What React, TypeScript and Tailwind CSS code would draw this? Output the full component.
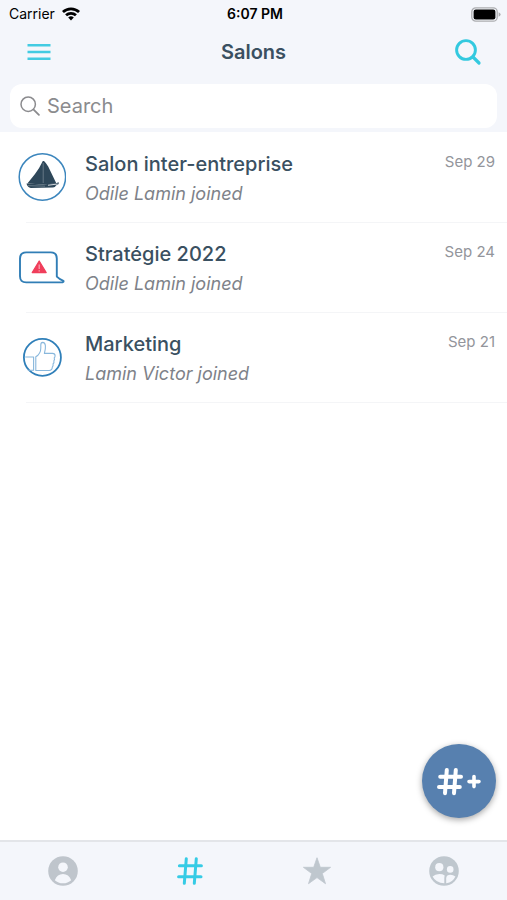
import { useState } from "react";
import type { ReactNode } from "react";

function Wifi() {
  return (
    <svg viewBox="0 0 18 14" className="w-[18px] h-[14px]" fill="black" aria-hidden="true">
      <path d="M0 4.1a12.8 12.8 0 0 1 18 0l-1.9 2a10.1 10.1 0 0 0-14.2 0z" />
      <path d="M3.1 7.3a8.4 8.4 0 0 1 11.8 0l-1.9 2a5.7 5.7 0 0 0-8 0z" />
      <path d="M6.2 10.5a4 4 0 0 1 5.6 0L9 13.4z" />
    </svg>
  );
}

function Battery() {
  return (
    <svg viewBox="0 0 30 15" className="w-[30px] h-[15px]" aria-hidden="true">
      <rect x="0.8" y="0.8" width="25.4" height="13.4" rx="4" fill="none" stroke="#acadb0" strokeWidth="1.3" />
      <rect x="2.6" y="2.6" width="21.8" height="9.8" rx="2.2" fill="#000" />
      <path d="M27.6 5.2q2 .8 2 2.3t-2 2.3z" fill="#acadb0" />
    </svg>
  );
}

function Sailboat() {
  return (
    <svg viewBox="0 0 48 48" className="size-12" aria-hidden="true">
      <circle cx="24.4" cy="24" r="23.2" fill="#fff" stroke="#3c86bd" strokeWidth="1.5" />
      <path d="M24.8 8h1.2q2 1.8 4.2 5.6L38.4 30.4 25 31.6 9.4 30.6 17 21q4.6-6 7.8-13z" fill="#2e4759" />
      <path d="M25.2 10v20" stroke="#8c9ba5" strokeWidth=".6" />
      <path d="M8.6 30.6 25 31.6l14-1.7 1.5-1 .2 2-2.7 1.6q-.8 1.9-3 2.1l-22.3.3q-3-.6-4.1-4z" fill="#2e4759" />
      <path d="m30 32.2 9.6-1.2" stroke="#d3d8db" strokeWidth="1.1" />
      <path d="m10 32.6 17 .6" stroke="#8c9ba5" strokeWidth=".6" />
    </svg>
  );
}

function AlertBubble() {
  return (
    <svg viewBox="0 0 48 48" className="size-12" fill="none" aria-hidden="true">
      <path
        d="M8.2 9.4h24.6q6 0 6 6V33.6q2.6 2.6 6.6 4.2.6.9-1 1.6H8.2Q2 39.4 2 33.2V15.6q0-6.2 6.2-6.2z"
        stroke="#317eb6"
        strokeWidth="1.9"
        strokeLinejoin="round"
      />
      <path d="M21.2 18 28.2 29.6H14.2z" fill="#f03e5b" stroke="#f03e5b" strokeWidth="1.2" strokeLinejoin="round" />
      <path d="M21.2 21.5v4.4M21.2 27.2v1.2" stroke="#f9a9b6" strokeWidth="1.2" />
    </svg>
  );
}

function ThumbsUp() {
  return (
    <svg viewBox="0 0 48 48" className="size-12" fill="none" aria-hidden="true">
      <circle cx="24.4" cy="24.4" r="18.5" stroke="#2f7fb9" strokeWidth="1.8" />
      <g stroke="#88b7dc" strokeWidth="1.1" strokeLinejoin="round">
        <path d="M7.2 24h8.4v13.3h-5.8" />
        <path d="M17.8 23.7q5-3 5-8.8V12q0-2.6 1.9-2.6 2.4.1 2.7 3.4.3 3.2-1 7.6h8.1q2.6.2 2.6 2.4 0 1.6-.9 2.2.8 1.4-.3 2.8.5 2-.8 3 .3 2.4-.8 3.4-.2 3.2-3.2 3.3H17.8z" />
      </g>
    </svg>
  );
}

function AddSalon() {
  return (
    <svg viewBox="0 0 48 32" className="w-12 h-8" fill="none" stroke="#fff" strokeLinecap="round" aria-hidden="true">
      <path d="M11.8 5 10 28.2M20.8 5 19 28.2M5.2 11.8h20.8M4 22h20.8" strokeWidth="4" />
      <path d="M39 11.6v10M34 16.6h10" strokeWidth="3.6" />
    </svg>
  );
}

function PersonIcon() {
  return (
    <svg viewBox="0 0 30 30" className="size-[30px]" aria-hidden="true">
      <circle cx="15" cy="15" r="14.8" fill="#bfc5cc" />
      <circle cx="15" cy="11.2" r="4.8" fill="#f4f6fb" />
      <path d="M6.8 24.2q2.4-6.2 8.2-6.2t8.2 6.2q-3.4 3.1-8.2 3.1t-8.2-3.1z" fill="#f4f6fb" />
    </svg>
  );
}

function HashIcon() {
  return (
    <svg viewBox="0 0 30 30" className="size-[30px]" fill="none" stroke="#36cbe5" strokeWidth="3" strokeLinecap="round" aria-hidden="true">
      <path d="m11.3 2.7-2 24.6M21.3 2.7l-2 24.6M4.4 9.8h22M3.6 20.8h22.4" />
    </svg>
  );
}

function StarIcon() {
  return (
    <svg viewBox="0 0 30 30" className="size-[30px]" aria-hidden="true">
      <path
        d="m15 1.7 3.3 9.6h10.3l-8.3 6.2 3.2 10.2-8.5-6.1-8.5 6.1 3.2-10.2-8.3-6.2h10.3z"
        fill="#bfc7ce"
        stroke="#bfc7ce"
        strokeWidth=".8"
        strokeLinejoin="round"
      />
    </svg>
  );
}

function GroupIcon() {
  return (
    <svg viewBox="0 0 30 30" className="size-[30px]" aria-hidden="true">
      <circle cx="15" cy="15" r="14.8" fill="#bfc7ce" />
      <g fill="#f4f6fb">
        <circle cx="10.3" cy="11.2" r="4.1" />
        <circle cx="21.2" cy="13.4" r="3.3" />
        <path d="M3.6 20.6q2.4-2.6 6.7-2.6 3.4 0 5.4 1.4-.4 1.4-.4 3.2v4.7Q6.8 27 3.6 20.6z" />
        <path d="M17.2 27.2V22q.4-3.2 4.2-3.2 2.8 0 5 1.6-2.4 5.7-9.2 6.8z" />
      </g>
    </svg>
  );
}

const salons: { name: string; last: string; date: string; icon: ReactNode }[] = [
  { name: "Salon inter-entreprise", last: "Odile Lamin joined", date: "Sep 29", icon: <Sailboat /> },
  { name: "Stratégie 2022", last: "Odile Lamin joined", date: "Sep 24", icon: <AlertBubble /> },
  { name: "Marketing", last: "Lamin Victor joined", date: "Sep 21", icon: <ThumbsUp /> },
];

const tabs = [
  { label: "Profile", icon: <PersonIcon /> },
  { label: "Salons", icon: <HashIcon /> },
  { label: "Favorites", icon: <StarIcon /> },
  { label: "Groups", icon: <GroupIcon /> },
];

export default function App() {
  const [query, setQuery] = useState("");
  const shown = salons.filter((s) => s.name.toLowerCase().includes(query.toLowerCase()));

  return (
    <div className="min-h-screen flex flex-col bg-white font-[Inter,sans-serif]">
      <header className="bg-[#f4f6fb] pb-1">
        {/* Status bar */}
        <div className="grid grid-cols-3 items-center h-7 pl-[9px] pr-1.5 text-sm text-black">
          <div className="flex items-center gap-[7px]">
            <span>Carrier</span>
            <Wifi />
          </div>
          <span className="text-center font-semibold">6:07 PM</span>
          <div className="flex justify-end">
            <Battery />
          </div>
        </div>

        <div className="flex items-center justify-between h-12 px-6">
          <button type="button" aria-label="Menu" className="size-[30px] flex items-center justify-center">
            <svg viewBox="0 0 24 18" className="w-6 h-[18px]" stroke="#43cbe2" strokeWidth="2.4" aria-hidden="true">
              <path d="M.5 2.2h23M.5 9h23M.5 15.8h23" />
            </svg>
          </button>
          <h1 className="text-xl font-semibold text-[#3a5061]">Salons</h1>
          <button type="button" aria-label="Search salons" className="size-[30px] flex items-center justify-center">
            <svg viewBox="0 0 28 28" className="size-7" fill="none" stroke="#33c9df" strokeLinecap="round" aria-hidden="true">
              <circle cx="12" cy="12" r="9.4" strokeWidth="2.9" />
              <path d="m19 19 6 6" strokeWidth="3.2" />
            </svg>
          </button>
        </div>

        <label className="mt-2 mx-2.5 h-11 px-2.5 flex items-center gap-[7px] rounded-xl bg-white">
          <svg viewBox="0 0 20 20" className="size-5 shrink-0" fill="none" stroke="#8b8b8e" strokeLinecap="round" aria-hidden="true">
            <circle cx="8.2" cy="8.2" r="7.2" strokeWidth="1.5" />
            <path d="m13.6 13.6 5.3 5.3" strokeWidth="1.8" />
          </svg>
          <input
            type="text"
            aria-label="Search"
            placeholder="Search"
            value={query}
            onChange={(e) => setQuery(e.target.value)}
            className="flex-1 min-w-0 text-xl outline-none text-[#3a5061] placeholder:text-[#8b8b8e]"
          />
        </label>
      </header>

      <main className="relative flex-1">
        <ul className="pt-px">
          {shown.map((salon) => (
            <li key={salon.name}>
              <a href="#" className="flex pl-[18px] pr-3 pt-4">
                <div className="pt-1 shrink-0">{salon.icon}</div>
                <div className="flex-1 min-w-0 ml-[19px] pb-3.5">
                  <div className="flex justify-between">
                    <h2 className="text-xl leading-[30px] font-medium text-[#3a5061]">{salon.name}</h2>
                    <time className="text-[15px] leading-[26px] text-[#93959b]">{salon.date}</time>
                  </div>
                  <p className="mt-px text-lg leading-7 italic text-[#7e8289]">{salon.last}</p>
                </div>
              </a>
              <div className="ml-[26px] border-b border-[#f4f5f7]" />
            </li>
          ))}
        </ul>

        <button
          type="button"
          aria-label="New salon"
          className="absolute right-[11px] bottom-[22px] size-[74px] rounded-full bg-[#5780af] flex items-center justify-center shadow-[0_2px_6px_rgba(0,0,0,0.35)]"
        >
          <AddSalon />
        </button>
      </main>

      <nav className="grid grid-cols-4 h-[60px] bg-[#f4f6fb] border-t-2 border-[#e3e5e9]">
        {tabs.map((tab) => (
          <button key={tab.label} type="button" aria-label={tab.label} className="flex items-center justify-center">
            {tab.icon}
          </button>
        ))}
      </nav>
    </div>
  );
}
